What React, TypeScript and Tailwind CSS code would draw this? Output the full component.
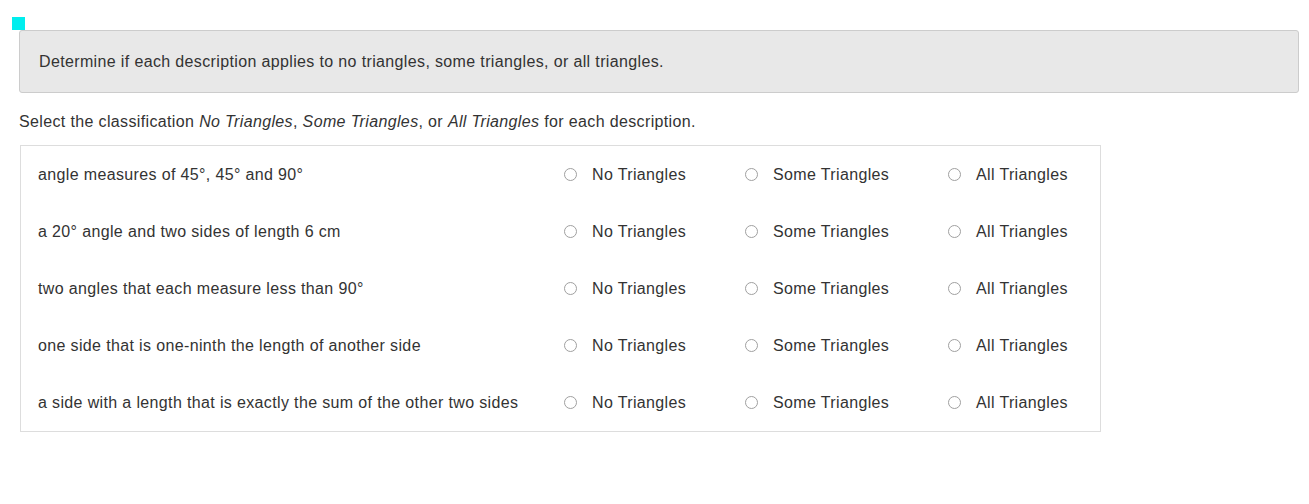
import React from 'react';

const rows = [
  'angle measures of 45°, 45° and 90°',
  'a 20° angle and two sides of length 6 cm',
  'two angles that each measure less than 90°',
  'one side that is one-ninth the length of another side',
  'a side with a length that is exactly the sum of the other two sides',
];

const options = [
  { label: 'No Triangles', width: 'w-[181px]' },
  { label: 'Some Triangles', width: 'w-[203px]' },
  { label: 'All Triangles', width: 'w-[169px]' },
];

const App: React.FC = () => {
  return (
    <div className="relative min-h-[504px] bg-white text-[16px] tracking-[0.36px] text-[#333] font-['Liberation_Sans',Arial,sans-serif]">
      <div className="absolute left-[12px] top-[17px] w-[13px] h-[13px] bg-[#00eeee]" />
      <div className="pl-[19px] pr-[10px] pt-[30px]">
        <div className="h-[63px] flex items-center pl-[19px] bg-[#e8e8e8] border border-[#cccccc] rounded-[3px]">
          Determine if each description applies to no triangles, some triangles, or all triangles.
        </div>
        <p className="mt-[18px] leading-[22px]">
          Select the classification <i>No Triangles</i>, <i>Some Triangles</i>, or <i>All Triangles</i> for each description.
        </p>
        <div className="mt-[12px] ml-px w-[1081px] border border-[#dddddd]">
          {rows.map((text, i) => (
            <div key={i} className="flex h-[57px] items-center">
              <div className="w-[525px] pl-[17px]">{text}</div>
              {options.map(o => (
                <label key={o.label} className={`${o.width} flex items-center pl-[18px]`}>
                  <span className="w-[13px] h-[13px] rounded-full border border-[#a0a0a0] bg-white" />
                  <span className="ml-[15px]">{o.label}</span>
                </label>
              ))}
            </div>
          ))}
        </div>
      </div>
    </div>
  );
};

export default App;
